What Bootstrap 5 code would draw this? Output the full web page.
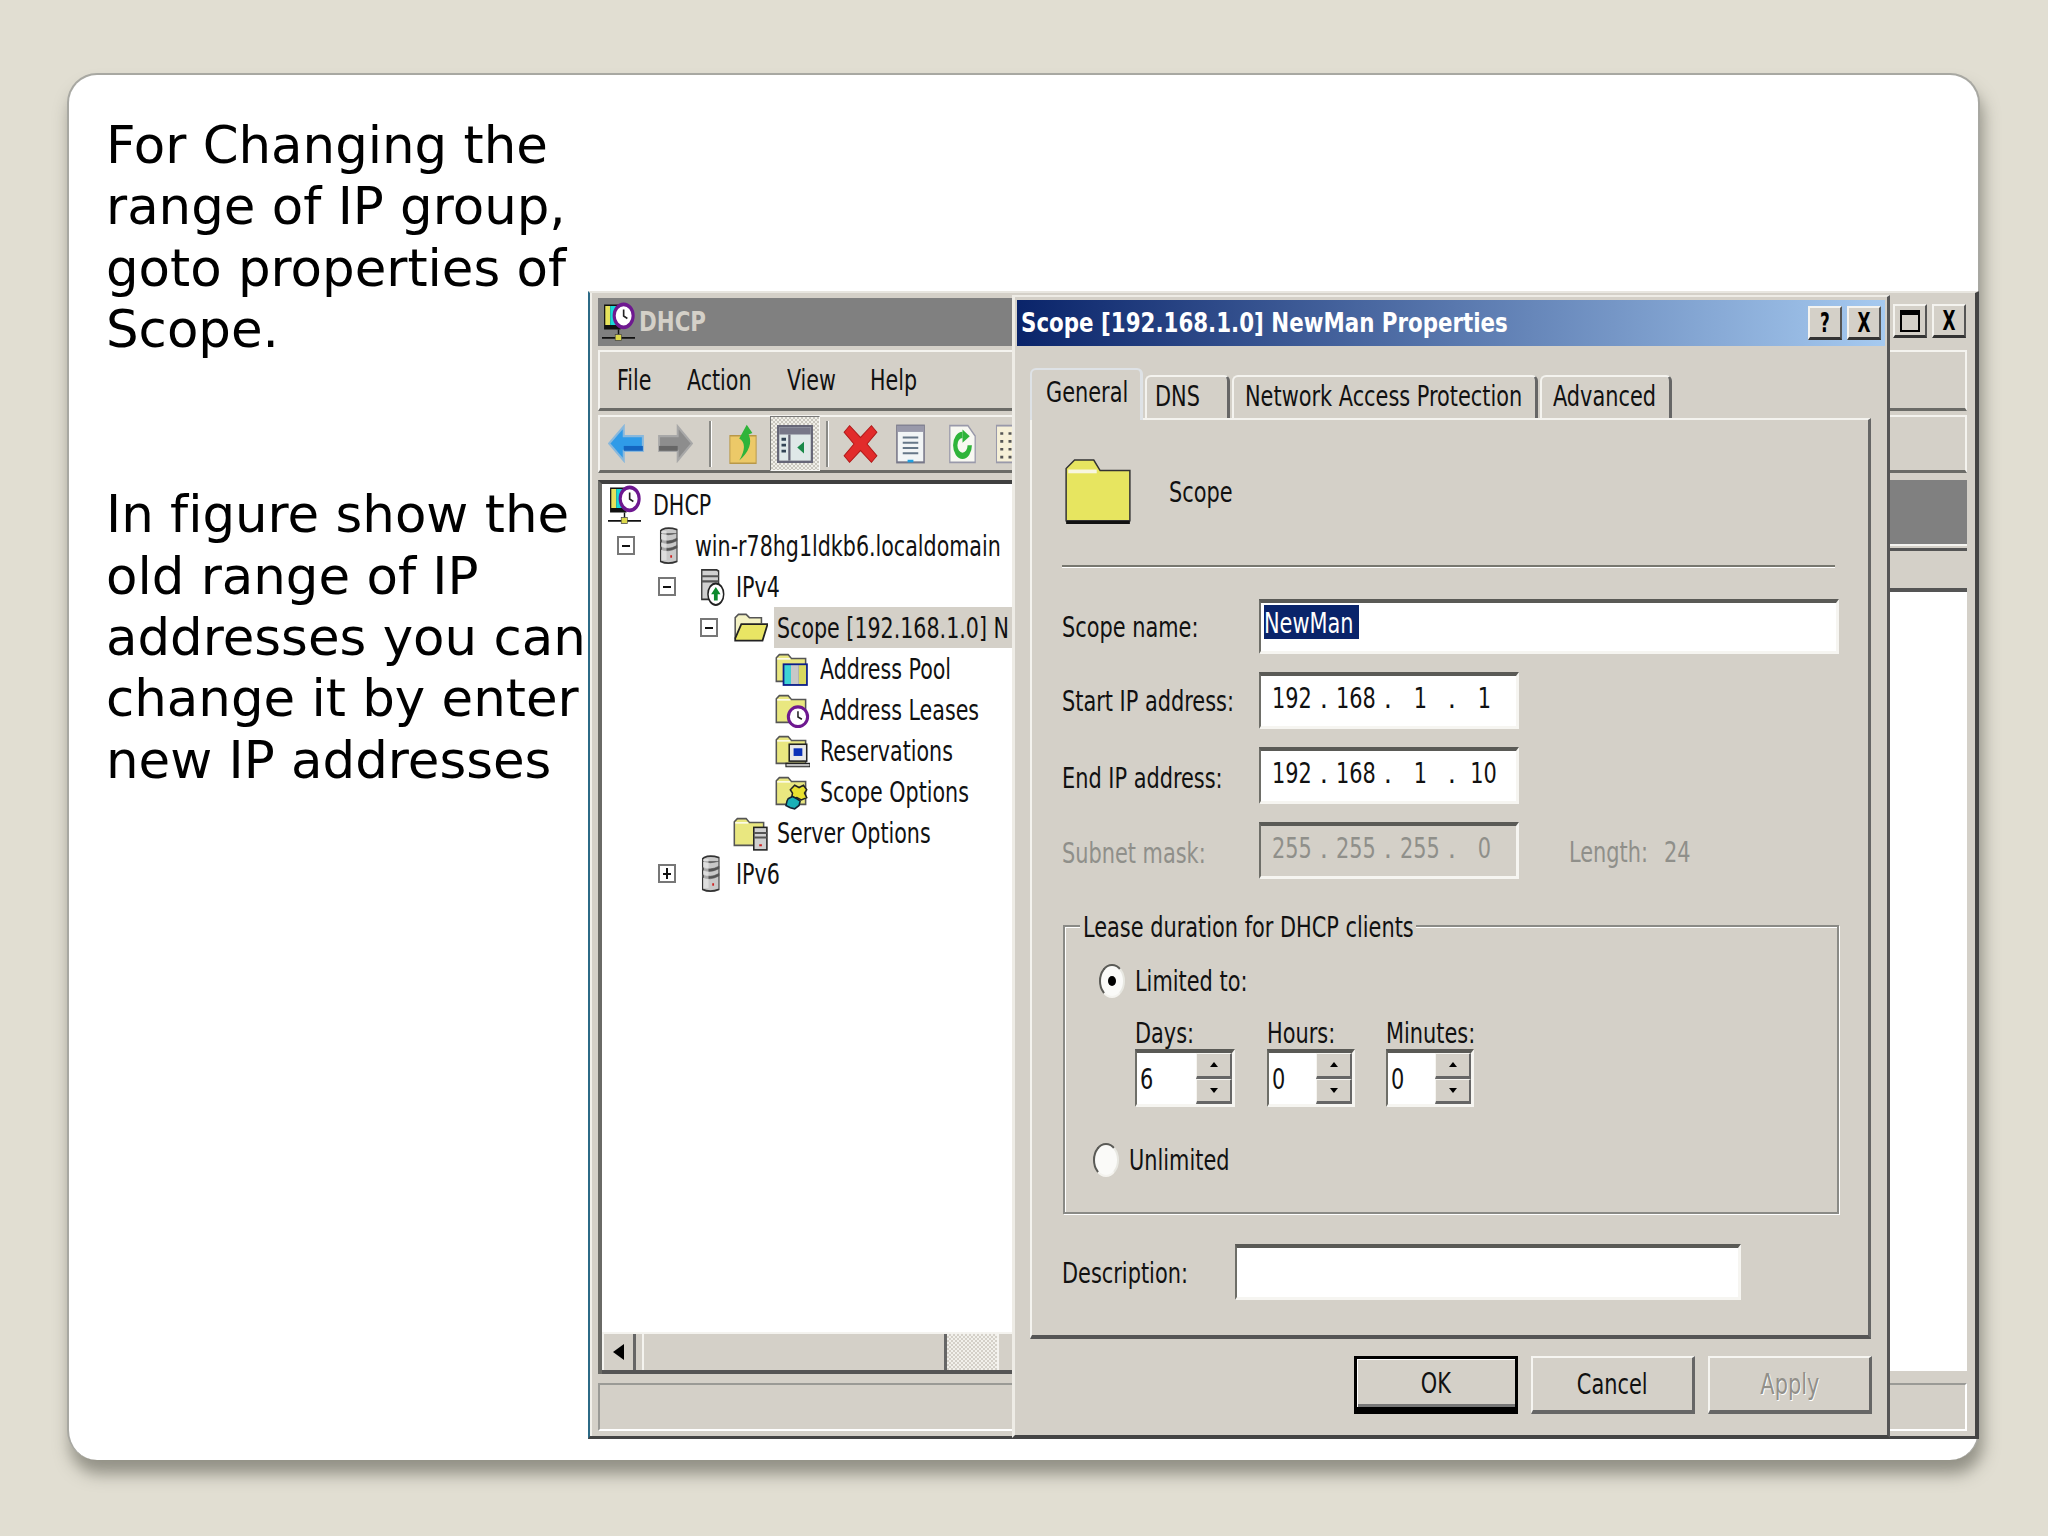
<!DOCTYPE html>
<html lang="en">
<head>
<meta charset="utf-8">
<title>DHCP scope properties</title>
<link href="https://cdn.jsdelivr.net/npm/bootstrap@5.3.0/dist/css/bootstrap.min.css" rel="stylesheet">
<style>
:root{--face:#d4d0c8;--dk:#5a5a56;--mid:#808080;}
html,body{margin:0;height:100%;background:#e1ded2;overflow:hidden}
.sheet{padding:73px 0 0 67px;width:2048px;height:1536px}
.slide-box{width:1913px;height:1387px;background:#fff;border:2px solid #a8a8a2;border-bottom:0;border-radius:30px;box-shadow:3px 14px 16px rgba(70,70,60,.5)}
.slide-text{width:519px;padding:40px 0 0 37px;font:51.4px/61.4px "DejaVu Sans",sans-serif;font-variant-ligatures:none;color:#000;white-space:nowrap;flex:none}
.slide-text p{margin:0 0 123.6px}
.shot{width:1391px;height:1148px;margin-top:216px;flex:none;position:relative;font-family:"DejaVu Sans",sans-serif;color:#111;overflow:hidden}
.mmc{height:100%;background:var(--face);border-left:2px solid #2c6a86;border-right:4px solid #444;border-bottom:3px solid #444;border-top:2px solid #e8e6e0;padding:5px 8px 5px 8px;box-shadow:inset 2px 0 0 #f2f0ea}
.mmc-title{height:48px;background:linear-gradient(90deg,#808080 32%,#d4d0c8 80%);padding-left:4px;flex:none}
.mmc-name{font-weight:700;color:#d4d0c8;font-size:27px;margin-left:4px}
.mmc-name .tn,.dlg-name .tn{transform:scaleX(.88)}
.band{border-top:2px solid #f4f3ef;border-left:2px solid #f4f3ef;border-right:2px solid #f4f3ef;border-bottom:3px solid #6b6b67}
.menu-band{height:61px;margin-top:4px;padding-left:17px;gap:0;flex:none}
.tool-band{height:58px;margin-top:4px;padding-left:8px;flex:none}
.m1{width:70px}.m2{width:100px}.m3{width:83px}
.sep{width:3px;height:46px;background:#8a8a86;border-right:1px solid #fff;flex:none}
.sep-a{margin:0 16px}.sep-b{margin:0 14px 0 6px}
.g14{margin-left:14px}.g17{margin-left:17px}.g22{margin-left:22px}.g18{margin-left:18px}
.pressed{width:50px;height:55px;background:repeating-conic-gradient(#c9c6be 0 25%,#f0efe9 0 50%) 0 0/4px 4px;border:1px solid #f8f8f6;border-left-color:#777;border-top-color:#777;margin:0 0 0 12px;flex:none}
.body-row{height:894px;margin-top:7px;flex:none}
.tree-pane{width:1000px;flex:none;border-top:4px solid #404040;border-left:4px solid #6a6a66;background:#fff}
.tree{height:848px;padding-top:0}
.trow{height:41px;white-space:nowrap}
.tbox{width:18px;height:19px;border:2px solid #777;background:#fff;position:relative;flex:none}
.tbox::before{content:"";position:absolute;left:3px;right:3px;top:6.5px;height:2px;background:#111}
.tbox.plus::after{content:"";position:absolute;top:2px;bottom:2px;left:6px;width:2px;background:#111}
.slot-l0{padding-left:6px}.slot-l1{padding-left:15px}.slot-l2{padding-left:56px}.slot-l3{padding-left:98px}.slot-l3b{padding-left:131px}.slot-l4{padding-left:173px}
.b1{width:39px}.b2{width:40px}.b3{width:33px}
.i0{width:45px}.i1{width:39px}.i2{width:38px}.i3{width:41px}.i3b{width:44px}.i4{width:45px}
.slot-box,.slot-icon{flex:none;display:flex;align-items:center}
.hilite{background:var(--face);height:41px;padding-left:3px;width:238px;display:flex;align-items:center;overflow:hidden}
.hscroll{height:42px;flex:none;background:var(--face);border-top:2px solid #f4f3ef;border-bottom:4px solid #555}
.hs-btn{width:34px;border-right:3px solid #666;border-left:2px solid #f4f3ef}
.hs-thumb{width:305px;margin-left:6px;border-left:2px solid #f4f3ef;border-right:3px solid #666}
.hs-track{width:50px;background:repeating-conic-gradient(#d4d0c8 0 25%,#f2f1ec 0 50%) 0 0/4px 4px}
.tri-l{width:0;height:0;border:8px solid transparent;border-right:11px solid #000;border-left:0}
.right-pane{width:0;flex:1 1 auto;background:var(--face)}
.rp-gray{height:66px;background:var(--mid);flex:none;border-bottom:2px solid #f4f3ef}
.rp-head{height:44px;border-top:3px solid #555;border-bottom:4px solid #555;margin-top:2px;flex:none}
.rp-white{flex:1 1 auto;background:#fff;border-bottom:3px solid #d4d0c8}
.status{height:48px;margin-top:9px;border:2px solid #9a9a96;border-right-color:#fff;border-bottom-color:#fff;flex:none}
.wbtns{gap:5px;padding:0}
.mmc-btns{top:13px;right:13px}
.capbtn{width:34px;height:34px;background:var(--face);border:2px solid #f4f3ef;border-right-color:#555;border-bottom:3px solid #333;font:700 26px/26px "DejaVu Sans",sans-serif;color:#000;display:flex;align-items:center;justify-content:center;flex:none}
.capbtn .tn{transform-origin:50% 50%}
.cap-max{width:20px;height:22px;border:2px solid #000;border-top-width:5px}
.dlg{position:absolute;left:424px;top:4px;width:878px;height:1143px;background:var(--face);border:2px solid #eeece6;border-left-width:3px;border-right:3px solid #555;border-bottom:3px solid #444;padding:3px 2px 0 2px}
.dlg-title{height:46px;flex:none;background:linear-gradient(90deg,#0a246a 0%,#a6caf0 100%);padding:0 4px 0 4px}
.dlg-name{color:#fff;font-weight:700;font-size:27px}
.t,.tt,.tm,.tn{display:inline-block;white-space:nowrap;transform-origin:0 50%}
.t{font-size:29px;font-stretch:condensed;transform:scaleX(.8);line-height:36px}
.tt{font-size:29px;font-stretch:condensed;transform:scaleX(.79);line-height:36px}
.tm{font-size:29px;font-stretch:condensed;transform:scaleX(.79);line-height:36px}
.tn{font-stretch:condensed;transform:scaleX(.72)}
.dlg-tabs{margin:22px 0 0 13px;height:50px;border:0;flex-wrap:nowrap;align-items:flex-end}
.dlg-tabs .nav-link{border-radius:6px 6px 0 0;padding:0 0 3px 8px;height:43px;background:var(--face);border:0;border-top:2px solid #f4f3ef;border-left:2px solid #f4f3ef;border-right:3px solid #666;color:#111;margin:0 2px 0 0;text-align:left;display:flex;align-items:center}
.dlg-tabs .nav-link.active{height:52px;width:113px;padding-left:14px;margin-bottom:-2px;background:var(--face);color:#111;position:relative;z-index:2;padding-bottom:7px}
.tab2{width:85px}
.dlg-tabs .nav-link.tab3{width:306px;padding-left:11px}
.dlg-tabs .nav-link.tab4{width:132px;padding-left:11px}
.dlg-panel{margin-left:13px;width:841px;height:921px;border:2px solid #f4f3ef;border-right:3px solid #666;border-bottom:4px solid #555;padding:38px 0 0 30px}
.scope-head{height:67px;flex:none}
.big-folder{width:68px;margin-left:2px;margin-right:37px;flex:none}
.rule{height:3px;margin:40px 0 0 0;width:773px;background:#77776f;border-bottom:1px solid #fff}
.frow{margin-top:18px;height:57px}
.frow.first{margin-top:31px;height:55px}
.flab{width:197px;flex:none}
.flab.low{padding-top:5px}
.fld{background:#fff;border-top:4px solid #5a5a56;border-left:2px solid #6e6e68;border-right:3px solid #f6f5f1;border-bottom:3px solid #f6f5f1;flex:none;height:100%}
.fld-name{width:580px;padding:2px 0 0 3px}
.fld-ip{width:260px;padding:0 0 6px 6px}
.sel{background:#0a246a;color:#fff;display:inline-block;width:95px;height:34px;line-height:33px;overflow:visible}
.oct{width:50px;text-align:center;flex:none}
.oct .t{transform-origin:50% 50%}
.dot{width:14px;text-align:center;flex:none;font-size:29px;line-height:36px;font-stretch:condensed}
.dis,.dis .t,.dis .dot{color:#8f8f8a}
.fld.off{background:var(--face)}
.len-lab{margin-left:50px;padding-top:3px}.len-a{display:inline-block;width:95px}
.grp{position:relative;margin-top:46px;height:289px;width:776px;border:2px solid #8a8a86;box-shadow:inset 1px 1px 0 #fff,1px 1px 0 #fff;margin-left:1px}
.grp-leg{position:absolute;left:15px;top:-18px;background:var(--face);padding:0 0 0 3px;height:34px;width:336px;display:block}
.radio-dot{width:26px;height:34px;border-radius:50%;background:#fafaf8;border:2px solid;border-color:#5a5a56 #e8e8e2 #f4f3ef #5a5a56;position:relative;flex:none}
.radio-dot.on::after{content:"";position:absolute;left:7px;top:10px;width:8px;height:10px;border-radius:50%;background:#000}
.r1{padding:36px 0 14px 34px;height:86px;gap:10px}
.spins{margin-left:70px;gap:0}
.spin-lab{height:36px;padding-top:2px}
.spin{width:100px;height:58px;background:#fff;border-top:4px solid #5a5a56;border-left:2px solid #6e6e68;border-right:3px solid #f6f5f1;border-bottom:3px solid #f6f5f1;padding-left:3px}
.spin.w2{width:88px}
.spin-ud{width:36px;background:var(--face);margin-left:auto;flex:none;height:100%}
.ud{flex:1 1 0;background:var(--face);border:1px solid #f6f5f1;border-right:2px solid #666;border-bottom:3px solid #666;display:flex;align-items:center;justify-content:center}
.tu{width:0;height:0;border:4px solid transparent;border-bottom:5px solid #000;border-top:0}
.td{width:0;height:0;border:4px solid transparent;border-top:5px solid #000;border-bottom:0}
.col-d{width:132px}.col-h{width:119px}
.r2{padding:0 0 0 28px;margin-top:36px;gap:10px;height:34px}
.desc{margin-top:30px;height:56px}
.desc .flab{width:173px;padding-top:1px}
.fld-desc{width:506px}
.dlg-btns{padding:17px 0 0 337px;gap:13px}
.dlg-btns .btn{width:164px;height:58px;padding:0;border-radius:0;background:var(--face);border:2px solid #f6f5f1;border-right:3px solid #666;border-bottom:4px solid #666;color:#111;opacity:1;text-align:center}
.dlg-btns .btn.okb{border:3px solid #000;border-bottom:7px solid #000;box-shadow:inset 1px 1px 0 #fff,inset 0 -3px 0 #777}
.dlg-btns .t{transform-origin:50% 50%}
.dlg-btns .btn.off .t{color:#918f89;text-shadow:1px 1px 0 #fff}
svg.ico{display:block;flex:none}
</style>
</head>
<body>
<svg width="0" height="0" class="position-absolute">
<defs>
<symbol id="i-dhcp" viewBox="0 0 16 16" preserveAspectRatio="none">
<rect x="1" y="1" width="8" height="9" fill="#111"/><rect x="1.6" y="1.6" width="2.4" height="7.6" fill="#e7e35c"/><rect x="4" y="1.6" width="4" height="7.6" fill="#18d8d8"/>
<rect x="1" y="10" width="8" height="1" fill="#111"/>
<circle cx="10.5" cy="5.5" r="4.6" fill="#fff" stroke="#6e1890" stroke-width="1.5"/><path d="M10.5 3v2.6l1.8 1" fill="none" stroke="#222" stroke-width=".8"/>
<path d="M0 14.3h16" stroke="#111" stroke-width=".7"/><path d="M8 11v2" stroke="#111" stroke-width=".7"/><rect x="6.4" y="13" width="3" height="2.4" fill="#dcd84a" stroke="#444" stroke-width=".3"/>
</symbol>
<symbol id="i-server" viewBox="0 0 16 16" preserveAspectRatio="none">
<path d="M4 1.5Q8 .3 14 1.5V14.5Q8 16 3 14.5V2Z" fill="#c9c9c9" stroke="#333" stroke-width=".7"/><path d="M3 5.5Q8 7 14 5H14V6Q8 8 3 6.5ZM3 8.5Q8 10 14 8V9Q8 11 3 9.5ZM3 3Q8 4.2 14 3" fill="#555" stroke="#555" stroke-width=".3"/><rect x="9.5" y="12" width="1.2" height="1" fill="#d02020"/><rect x="4" y="2" width="3" height="12" fill="#eee" opacity=".55"/>
</symbol>
<symbol id="i-ipv4" viewBox="0 0 16 16" preserveAspectRatio="none">
<path d="M2 1.5H10L11 2V13H2Z" fill="#d0d0d0" stroke="#333" stroke-width=".7"/><path d="M2 4H11M2 6H11" stroke="#555" stroke-width=".8"/>
<circle cx="9.5" cy="11" r="4.2" fill="#fff" stroke="#222" stroke-width=".8"/><path d="M9.5 8.2L12 11H10.5V13.5H8.5V11H7Z" fill="#0b8a2c"/>
</symbol>
<symbol id="i-fopen" viewBox="0 0 16 16" preserveAspectRatio="none">
<path d="M1 13V3.5L2.5 2H6L7.5 3.5H13V6" fill="#f4f2c4" stroke="#555" stroke-width=".7"/><path d="M1 13L3.8 6.5H15.8L13.5 14H1Z" fill="#e9e564" stroke="#222" stroke-width=".8"/>
</symbol>
<symbol id="f-base" viewBox="0 0 16 16" preserveAspectRatio="none">
<path d="M.6 13V3L2 1.6H6L7.5 3.3H14V13.5H.6Z" fill="#e9e780" stroke="#555" stroke-width=".7"/><path d="M1 3.5H7" stroke="#fff" stroke-width=".6"/>
</symbol>
<symbol id="i-fpool" viewBox="0 0 16 16" preserveAspectRatio="none">
<use href="#f-base"/><rect x="3.5" y="5.5" width="11.5" height="10" fill="#0b1e8a"/><rect x="4.3" y="6.3" width="3" height="8.4" fill="#3dd4d4"/><rect x="7.3" y="6.3" width="3.6" height="8.4" fill="#c8c8c8"/><rect x="10.9" y="6.3" width="3.3" height="8.4" fill="#d8d860"/>
</symbol>
<symbol id="i-fclock" viewBox="0 0 16 16" preserveAspectRatio="none">
<use href="#f-base"/><circle cx="10.5" cy="11" r="4.4" fill="#fff" stroke="#6e1890" stroke-width="1.4"/><path d="M10.5 8.5v2.6l1.8 1" fill="none" stroke="#222" stroke-width=".7"/>
</symbol>
<symbol id="i-fres" viewBox="0 0 16 16" preserveAspectRatio="none">
<use href="#f-base"/><rect x="6.5" y="5" width="8" height="7.5" fill="#e8e8e8" stroke="#222" stroke-width=".7"/><rect x="8.5" y="6.8" width="4" height="3.4" fill="#0a30b8"/><path d="M5 13.5H16V15H5Z" fill="#bbb" stroke="#222" stroke-width=".5"/>
</symbol>
<symbol id="i-fopt" viewBox="0 0 16 16" preserveAspectRatio="none">
<use href="#f-base"/><path d="M9 5l2 1 2-1 1.5 2-1 1.5 1 2-2.5 1-2-1-2.5.5.5-2.5-1-1.5Z" fill="#e8e030" stroke="#222" stroke-width=".7"/><path d="M6 11l2-1 2 1 1.5 1-.5 2-2 1.5-2-.5-2-1 .5-2Z" fill="#19b0b8" stroke="#123" stroke-width=".7"/>
</symbol>
<symbol id="i-fsrv" viewBox="0 0 16 16" preserveAspectRatio="none">
<use href="#f-base"/><rect x="9.5" y="5.5" width="6" height="10" fill="#d0d0d0" stroke="#222" stroke-width=".7"/><path d="M9.5 8H15.5M9.5 10H15.5" stroke="#555" stroke-width=".8"/><rect x="12" y="13" width="1.2" height=".9" fill="#d02020"/>
</symbol>
</defs>
</svg>

<main class="sheet">
<div class="slide-box d-flex">
  <div class="slide-text">
    <p>For Changing the<br>range of IP group,<br>goto properties of<br>Scope.</p>
    <p class="mb-0">In figure show the<br>old range of IP<br>addresses you can<br>change it by enter<br>new IP addresses</p>
  </div>
  <div class="shot">
    <div class="mmc d-flex flex-column">
      <div class="mmc-title d-flex align-items-center">
        <svg class="ico" width="33" height="40"><use href="#i-dhcp"/></svg>
        <span class="mmc-name"><span class="tn">DHCP</span></span>
      </div>
      <div class="band menu-band d-flex align-items-center">
        <span class="m1"><span class="tm">File</span></span><span class="m2"><span class="tm">Action</span></span><span class="m3"><span class="tm">View</span></span><span><span class="tm">Help</span></span>
      </div>
      <div class="band tool-band d-flex align-items-center">
        <svg class="ico" width="36" height="39" viewBox="0 0 16 16" preserveAspectRatio="none"><path d="M.5 8L7 1V5H15.5V11H7V15Z" fill="#2f9be8" stroke="#89b8dc" stroke-width=".9"/><path d="M7 9H15.5V11H7Z" fill="#1465c0"/></svg>
        <svg class="ico g14" width="35" height="39" viewBox="0 0 16 16" preserveAspectRatio="none"><path d="M15.5 8L9 1V5H.5V11H9V15Z" fill="#8d8d8d" stroke="#a8a8a8" stroke-width=".9"/><path d="M.5 9H9V11H.5Z" fill="#666"/></svg>
        <span class="sep sep-a"></span>
        <svg class="ico" width="30" height="44" viewBox="0 0 16 16" preserveAspectRatio="none"><path d="M1 15V5H15V15Z" fill="#ecc968" stroke="#b89848" stroke-width=".5"/><path d="M6 14Q11 8 6 6L10 1L13 4L11 4.5Q14 9 6 14Z" fill="#2fb43a"/></svg>
        <span class="pressed d-flex align-items-center justify-content-center">
          <svg class="ico" width="36" height="38" viewBox="0 0 16 16" preserveAspectRatio="none"><rect x=".5" y=".5" width="15" height="15" fill="#dfe8e8" stroke="#667"/><rect x="1" y="1" width="14" height="3" fill="#778"/><path d="M5.5 4V15" stroke="#667"/><path d="M2 6h2M2 8.5h2M2 11h2" stroke="#345" stroke-width="1.2"/><path d="M12 7V12L9 9.5Z" fill="#188848"/></svg>
        </span>
        <span class="sep sep-b"></span>
        <svg class="ico" width="35" height="42" viewBox="0 0 16 16" preserveAspectRatio="none"><path d="M3 1L8 5.5L13 1L15.5 3.5L11 8L15.5 12.5L13 15L8 10.5L3 15L.5 12.5L5 8L.5 3.5Z" fill="#e22b2b" stroke="#b01818" stroke-width=".4"/></svg>
        <svg class="ico g17" width="31" height="42" viewBox="0 0 16 16" preserveAspectRatio="none"><rect x="1" y="1" width="14" height="14" fill="#f2f5f6" stroke="#778" stroke-width=".8"/><rect x="1" y="1" width="14" height="2.4" fill="#99a"/><path d="M4 5.5H12M4 7.5H12M4 9.5H12M4 11.5H12" stroke="#678" stroke-width=".8"/><rect x="6.5" y="14" width="3" height="1" fill="#20a0e0"/></svg>
        <svg class="ico g22" width="29" height="42" viewBox="0 0 16 16" preserveAspectRatio="none"><path d="M1 1H11L15 5V15H1Z" fill="#f8f8f2" stroke="#99a" stroke-width=".7"/><path d="M8 4.5A4 4 0 1 0 12 8.5" fill="none" stroke="#2fb43a" stroke-width="2.4"/><path d="M8 2.5L12 5L8 7.5Z" fill="#2fb43a"/></svg>
        <svg class="ico g18" width="24" height="42" viewBox="0 0 16 16" preserveAspectRatio="none"><rect x="1" y="1" width="18" height="14" fill="#f6f0d8" stroke="#99a" stroke-width=".7"/><path d="M3.5 4h2M3.5 7h2M3.5 10h2M3.5 13h2M9 4h2M9 7h2M9 10h2M9 13h2" stroke="#555" stroke-width="1"/></svg>
      </div>
      <div class="body-row d-flex">
        <div class="tree-pane d-flex flex-column">
          <div class="tree flex-grow-1 overflow-hidden">
            <div class="trow d-flex align-items-center slot-l0"><span class="slot-icon i0"><svg class="ico" width="33" height="40"><use href="#i-dhcp"/></svg></span><span class="tt">DHCP</span></div>
            <div class="trow d-flex align-items-center slot-l1"><span class="slot-box b1"><span class="tbox"></span></span><span class="slot-icon i1"><svg class="ico" width="24" height="39"><use href="#i-server"/></svg></span><span class="tt">win-r78hg1ldkb6.localdomain</span></div>
            <div class="trow d-flex align-items-center slot-l2"><span class="slot-box b2"><span class="tbox"></span></span><span class="slot-icon i2"><svg class="ico" width="30" height="41"><use href="#i-ipv4"/></svg></span><span class="tt">IPv4</span></div>
            <div class="trow d-flex align-items-center slot-l3"><span class="slot-box b3"><span class="tbox"></span></span><span class="slot-icon i3"><svg class="ico" width="35" height="35"><use href="#i-fopen"/></svg></span><span class="hilite"><span class="tt">Scope [192.168.1.0] N</span></span></div>
            <div class="trow d-flex align-items-center slot-l4"><span class="slot-icon i4"><svg class="ico" width="35" height="36"><use href="#i-fpool"/></svg></span><span class="tt">Address Pool</span></div>
            <div class="trow d-flex align-items-center slot-l4"><span class="slot-icon i4"><svg class="ico" width="35" height="36"><use href="#i-fclock"/></svg></span><span class="tt">Address Leases</span></div>
            <div class="trow d-flex align-items-center slot-l4"><span class="slot-icon i4"><svg class="ico" width="35" height="36"><use href="#i-fres"/></svg></span><span class="tt">Reservations</span></div>
            <div class="trow d-flex align-items-center slot-l4"><span class="slot-icon i4"><svg class="ico" width="35" height="36"><use href="#i-fopt"/></svg></span><span class="tt">Scope Options</span></div>
            <div class="trow d-flex align-items-center slot-l3b"><span class="slot-icon i3b"><svg class="ico" width="35" height="36"><use href="#i-fsrv"/></svg></span><span class="tt">Server Options</span></div>
            <div class="trow d-flex align-items-center slot-l2"><span class="slot-box b2"><span class="tbox plus"></span></span><span class="slot-icon i2"><svg class="ico" width="24" height="39"><use href="#i-server"/></svg></span><span class="tt">IPv6</span></div>
          </div>
          <div class="hscroll d-flex">
            <span class="hs-btn d-flex align-items-center justify-content-center"><span class="tri-l"></span></span>
            <span class="hs-thumb"></span>
            <span class="hs-track"></span>
            <span class="hs-btn"></span>
          </div>
        </div>
        <div class="right-pane d-flex flex-column">
          <div class="rp-gray"></div>
          <div class="rp-head"></div>
          <div class="rp-white"></div>
        </div>
      </div>
      <div class="status"></div>
    </div>

    <div class="d-flex position-absolute wbtns mmc-btns">
      <span class="capbtn"><span class="cap-max"></span></span>
      <span class="capbtn"><span class="tn">X</span></span>
    </div>

    <div class="dlg d-flex flex-column">
      <div class="dlg-title d-flex align-items-center">
        <span class="dlg-name"><span class="tn">Scope [192.168.1.0] NewMan Properties</span></span>
        <span class="d-flex ms-auto wbtns"><span class="capbtn"><span class="tn">?</span></span><span class="capbtn"><span class="tn">X</span></span></span>
      </div>
      <ul class="nav nav-tabs dlg-tabs">
        <li class="nav-item"><a class="nav-link active"><span class="t">General</span></a></li>
        <li class="nav-item"><a class="nav-link tab2"><span class="t">DNS</span></a></li>
        <li class="nav-item"><a class="nav-link tab3"><span class="t">Network Access Protection</span></a></li>
        <li class="nav-item"><a class="nav-link tab4"><span class="t">Advanced</span></a></li>
      </ul>
      <div class="dlg-panel">
        <div class="scope-head d-flex align-items-center">
          <svg class="ico big-folder" height="67" viewBox="0 0 16 16" preserveAspectRatio="none"><path d="M.5 15V2.5L2.5 .5H7L8.5 3H15.5V15Z" fill="#e7e560" stroke="#333" stroke-width=".35"/><path d="M1 3.2H7.7" stroke="#f8f6e0" stroke-width=".9" fill="none"/><path d="M.5 15.4H15.5" stroke="#111" stroke-width=".7"/></svg>
          <span class="t">Scope</span>
        </div>
        <div class="rule"></div>
        <div class="frow first d-flex align-items-center"><span class="flab"><span class="t">Scope name:</span></span><div class="fld fld-name"><span class="sel"><span class="t">NewMan</span></span></div></div>
        <div class="frow d-flex align-items-center"><span class="flab"><span class="t">Start IP address:</span></span><div class="fld fld-ip d-flex align-items-center"><span class="oct"><span class="t">192</span></span><span class="dot">.</span><span class="oct"><span class="t">168</span></span><span class="dot">.</span><span class="oct"><span class="t">1</span></span><span class="dot">.</span><span class="oct"><span class="t">1</span></span></div></div>
        <div class="frow d-flex align-items-center"><span class="flab low"><span class="t">End IP address:</span></span><div class="fld fld-ip d-flex align-items-center"><span class="oct"><span class="t">192</span></span><span class="dot">.</span><span class="oct"><span class="t">168</span></span><span class="dot">.</span><span class="oct"><span class="t">1</span></span><span class="dot">.</span><span class="oct"><span class="t">10</span></span></div></div>
        <div class="frow d-flex align-items-center dis"><span class="flab low"><span class="t">Subnet mask:</span></span><div class="fld off fld-ip d-flex align-items-center"><span class="oct"><span class="t">255</span></span><span class="dot">.</span><span class="oct"><span class="t">255</span></span><span class="dot">.</span><span class="oct"><span class="t">255</span></span><span class="dot">.</span><span class="oct"><span class="t">0</span></span></div><span class="len-lab"><span class="len-a"><span class="t">Length:</span></span><span class="t">24</span></span></div>
        <div class="grp">
          <span class="grp-leg"><span class="t">Lease duration for DHCP clients</span></span>
          <div class="r1 d-flex align-items-center"><span class="radio-dot on"></span><span class="t">Limited to:</span></div>
          <div class="d-flex spins">
            <div class="col-d"><div class="spin-lab"><span class="t">Days:</span></div><div class="spin d-flex align-items-center"><span class="t">6</span><span class="spin-ud d-flex flex-column"><span class="ud"><span class="tu"></span></span><span class="ud"><span class="td"></span></span></span></div></div>
            <div class="col-h"><div class="spin-lab"><span class="t">Hours:</span></div><div class="spin w2 d-flex align-items-center"><span class="t">0</span><span class="spin-ud d-flex flex-column"><span class="ud"><span class="tu"></span></span><span class="ud"><span class="td"></span></span></span></div></div>
            <div><div class="spin-lab"><span class="t">Minutes:</span></div><div class="spin w2 d-flex align-items-center"><span class="t">0</span><span class="spin-ud d-flex flex-column"><span class="ud"><span class="tu"></span></span><span class="ud"><span class="td"></span></span></span></div></div>
          </div>
          <div class="r2 d-flex align-items-center"><span class="radio-dot"></span><span class="t">Unlimited</span></div>
        </div>
        <div class="desc d-flex align-items-center"><span class="flab"><span class="t">Description:</span></span><div class="fld fld-desc"></div></div>
      </div>
      <div class="dlg-btns d-flex">
        <button type="button" class="btn okb"><span class="t">OK</span></button>
        <button type="button" class="btn"><span class="t">Cancel</span></button>
        <button type="button" class="btn off"><span class="t">Apply</span></button>
      </div>
    </div>
  </div>
</div>
</main>
</body>
</html>
